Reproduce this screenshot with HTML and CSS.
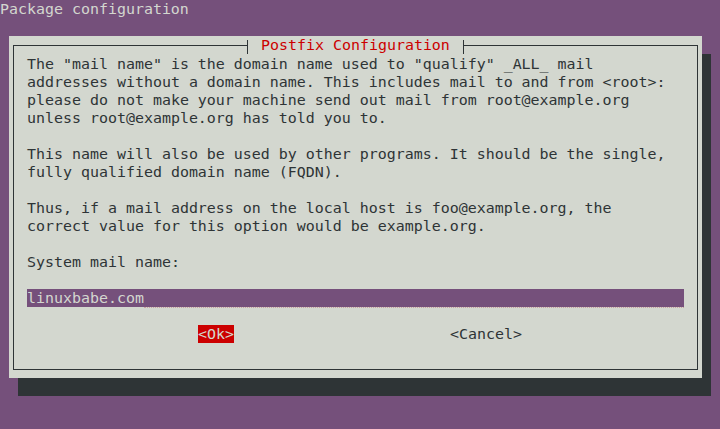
FILE: index.html
```html
<!DOCTYPE html>
<html>
<head>
<meta charset="utf-8">
<link rel="stylesheet" href="styles.css">
</head>
<body>
<div class="term">
  <div class="line header">Package configuration</div>
  <div class="line"></div>
  <div class="dialog">
    <div class="frame">
      <div class="title"><span class="tick"></span><span class="title-text">Postfix Configuration</span><span class="tick"></span></div>
      <pre class="msg">The "mail name" is the domain name used to "qualify" _ALL_ mail
addresses without a domain name. This includes mail to and from &lt;root&gt;:
please do not make your machine send out mail from root@example.org
unless root@example.org has told you to.

This name will also be used by other programs. It should be the single,
fully qualified domain name (FQDN).

Thus, if a mail address on the local host is foo@example.org, the
correct value for this option would be example.org.

System mail name:</pre>
      <div class="field"><span class="value">linuxbabe.com</span><span class="rest"></span></div>
      <div class="buttons">
        <span class="btn active">&lt;Ok&gt;</span>
        <span class="btn">&lt;Cancel&gt;</span>
      </div>
    </div>
  </div>
</div>
</body>
</html>
```

FILE: styles.css
```css
html, body {
  margin: 0;
  padding: 0;
  background: #75507b;
}
.term {
  width: 720px;
  height: 429px;
  overflow: hidden;
  font-family: "DejaVu Sans Mono", "Liberation Mono", monospace;
  font-size: 14.95px;
  line-height: 18px;
  color: #d3d7cf;
}
.line {
  height: 18px;
  white-space: pre;
}
.header {
  color: #d3d7cf;
}
.dialog {
  margin-left: 9px;
  width: 693px;
  height: 342px;
  box-sizing: border-box;
  padding: 9px 4px 8px 4px;
  background: #d3d7cf;
  box-shadow: 9px 18px 0 0 #2e3436;
  color: #2e3436;
}
.frame {
  position: relative;
  height: 100%;
  box-sizing: border-box;
  border: 1px solid #2e3436;
  padding: 9px 0 0 13px;
}
.title {
  position: absolute;
  top: -10px;
  left: 233px;
  display: flex;
  height: 18px;
  background: linear-gradient(#d3d7cf, #d3d7cf) 1px 0 / calc(100% - 2px) 100% no-repeat;
}
.tick {
  width: 1px;
  height: 14px;
  margin-top: 4px;
  background: #2e3436;
}
.title-text {
  color: #cc0000;
  margin: 0 13px;
  line-height: 18px;
  white-space: pre;
}
.msg {
  margin: 0 0 18px 0;
  font: inherit;
  line-height: 18px;
  white-space: pre;
}
.field {
  width: 657px;
  height: 18px;
  display: flex;
  background: #75507b;
  color: #d3d7cf;
  box-sizing: border-box;
  padding-top: 1px;
  line-height: 17px;
}
.value {
  height: 18px;
}
.rest {
  flex: 1;
  height: 17px;
  border-bottom: 1px dotted #c9a0a0;
}
.buttons {
  display: flex;
  gap: 216px;
  margin-top: 18px;
  padding-left: 171px;
  height: 18px;
}
.btn {
  white-space: pre;
  color: #2e3436;
}
.btn.active {
  background: #cc0000;
  color: #d3d7cf;
}
```
